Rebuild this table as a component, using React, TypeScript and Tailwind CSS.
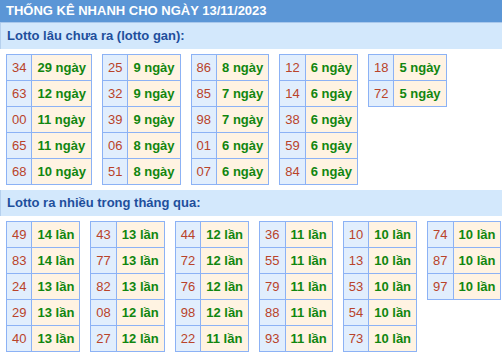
const gan: [string, string][][] = [
  [["34", "29"], ["63", "12"], ["00", "11"], ["65", "11"], ["68", "10"]],
  [["25", "9"], ["32", "9"], ["39", "9"], ["06", "8"], ["51", "8"]],
  [["86", "8"], ["85", "7"], ["98", "7"], ["01", "6"], ["07", "6"]],
  [["12", "6"], ["14", "6"], ["38", "6"], ["59", "6"], ["84", "6"]],
  [["18", "5"], ["72", "5"]],
];

const nhieu: [string, string][][] = [
  [["49", "14"], ["83", "14"], ["24", "13"], ["29", "13"], ["40", "13"]],
  [["43", "13"], ["77", "13"], ["82", "13"], ["08", "12"], ["27", "12"]],
  [["44", "12"], ["72", "12"], ["76", "12"], ["98", "12"], ["22", "11"]],
  [["36", "11"], ["55", "11"], ["79", "11"], ["88", "11"], ["93", "11"]],
  [["10", "10"], ["13", "10"], ["53", "10"], ["54", "10"], ["73", "10"]],
  [["74", "10"], ["87", "10"], ["97", "10"]],
];

function LottoTable(props: { rows: [string, string][]; unit: string }) {
  return (
    <table className="border-collapse self-start shrink-0 whitespace-nowrap">
      <tbody>
        {props.rows.map(([num, count]) => (
          <tr key={num} className="h-[26px]">
            <td className="border border-[#8cb2f5] bg-[#e1eefd] px-[5px] text-[#b9432a]">
              {num}
            </td>
            <td className="border border-[#8cb2f5] bg-[#fff3e2] px-[5px] font-bold text-[#11860f]">
              {count} {props.unit}
            </td>
          </tr>
        ))}
      </tbody>
    </table>
  );
}

export default function App() {
  return (
    <div className="w-[502px] h-[353px] bg-white font-['Liberation_Sans',Arial,sans-serif] text-[13px] overflow-hidden">
      <div className="h-[23px] bg-[#5b96d6] border-b border-[#a9c8ec] pl-[6px] flex items-center text-white font-bold">
        THỐNG KÊ NHANH CHO NGÀY 13/11/2023
      </div>
      <div className="h-[26px] bg-[#d3e8fc] border-l border-[#b5d0ee] pl-[6px] flex items-center text-[#1e4f9c] font-bold">
        Lotto lâu chưa ra (lotto gan):
      </div>
      <div className="flex gap-x-[10px] px-[6px] pt-[5px]">
        {gan.map((rows, i) => (
          <LottoTable key={i} rows={rows} unit="ngày" />
        ))}
      </div>
      <div className="mt-[5px] h-[26px] bg-[#d3e8fc] border-l border-[#b5d0ee] pl-[6px] flex items-center text-[#1e4f9c] font-bold">
        Lotto ra nhiều trong tháng qua:
      </div>
      <div className="flex gap-x-[10px] px-[6px] pt-[5px]">
        {nhieu.map((rows, i) => (
          <LottoTable key={i} rows={rows} unit="lần" />
        ))}
      </div>
    </div>
  );
}
